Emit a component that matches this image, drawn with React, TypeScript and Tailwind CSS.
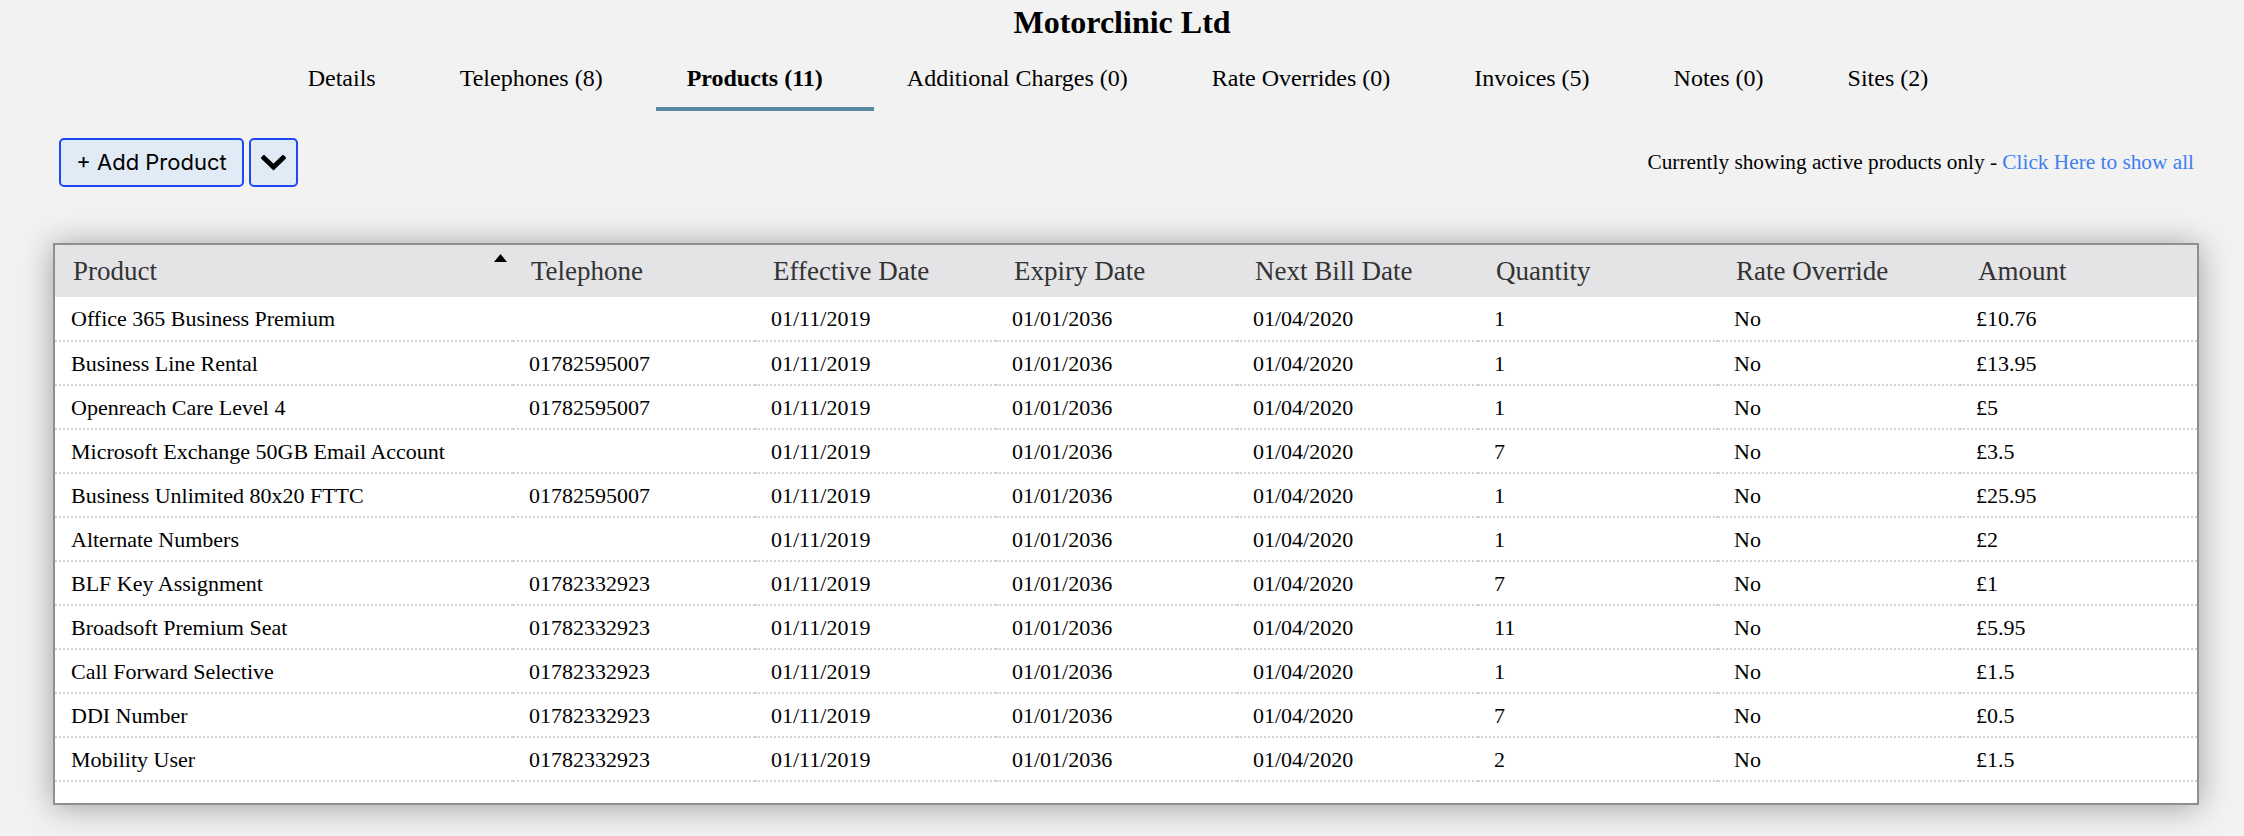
import React from 'react';

const tabs = [
  { label: 'Details' },
  { label: 'Telephones (8)' },
  { label: 'Products (11)', active: true },
  { label: 'Additional Charges (0)' },
  { label: 'Rate Overrides (0)' },
  { label: 'Invoices (5)' },
  { label: 'Notes (0)' },
  { label: 'Sites (2)' },
];

const columns = ['Product', 'Telephone', 'Effective Date', 'Expiry Date', 'Next Bill Date', 'Quantity', 'Rate Override', 'Amount'];

const products = [
  ['Office 365 Business Premium', '', '1', '£10.76'],
  ['Business Line Rental', '01782595007', '1', '£13.95'],
  ['Openreach Care Level 4', '01782595007', '1', '£5'],
  ['Microsoft Exchange 50GB Email Account', '', '7', '£3.5'],
  ['Business Unlimited 80x20 FTTC', '01782595007', '1', '£25.95'],
  ['Alternate Numbers', '', '1', '£2'],
  ['BLF Key Assignment', '01782332923', '7', '£1'],
  ['Broadsoft Premium Seat', '01782332923', '11', '£5.95'],
  ['Call Forward Selective', '01782332923', '1', '£1.5'],
  ['DDI Number', '01782332923', '7', '£0.5'],
  ['Mobility User', '01782332923', '2', '£1.5'],
];

const App: React.FC = () => {
  return (
    <div className="min-h-screen bg-[#f2f2f2] font-['Liberation_Serif',serif] text-black">
      <h1 className="pt-[4px] text-center text-[32px] font-bold leading-[36px]">Motorclinic Ltd</h1>

      {/* Tabs */}
      <nav className="flex justify-center pr-[8px]">
        {tabs.map((tab) => (
          <div key={tab.label} className="pt-[23px]">
            <div className={`px-[42px] pb-[14px] text-[24px] leading-[30px] ${tab.active ? 'font-bold' : ''}`}>
              {tab.label}
            </div>
            <div className={tab.active ? 'ml-[11px] -mr-[9px] h-[4px] bg-[#5b88a1]' : 'h-[4px]'}></div>
          </div>
        ))}
      </nav>

      {/* Toolbar */}
      <div className="mt-[27px] flex items-center justify-between pl-[59px] pr-[50px]">
        <div className="flex gap-[5px]">
          <button className="h-[49px] w-[185px] rounded-[5px] border-2 border-[#1f48f5] bg-[#e1ebf6] font-['Inter',sans-serif] text-[22px] text-black">
            + Add Product
          </button>
          <button className="flex h-[49px] w-[49px] items-center justify-center rounded-[5px] border-2 border-[#1f48f5] bg-[#e1ebf6]">
            <svg width="25" height="16" viewBox="0 0 25 16">
              <path d="M3 3 L12.5 12 L22 3" fill="none" stroke="black" strokeWidth="5" strokeLinecap="square" />
            </svg>
          </button>
        </div>
        <div className="text-[21.3px]">
          Currently showing active products only - <a className="text-[#3f7ff0] cursor-pointer">Click Here to show all</a>
        </div>
      </div>

      {/* Products table */}
      <div className="mt-[56px] ml-[53px] mr-[45px] border-2 border-[#8f8f8f] bg-white pb-[21px] shadow-[0_2px_30px_rgba(0,0,0,0.35)]">
        <table className="w-full table-fixed border-collapse">
          <colgroup>
            <col className="w-[458px]" />
            <col className="w-[242px]" />
            <col className="w-[241px]" />
            <col className="w-[241px]" />
            <col className="w-[241px]" />
            <col className="w-[240px]" />
            <col className="w-[242px]" />
            <col />
          </colgroup>
          <thead>
            <tr className="h-[52px] bg-[#e4e4e6]">
              {columns.map((col, i) => (
                <th key={col} className="relative pl-[18px] text-left text-[27px] font-normal text-[#333]">
                  {col}
                  {i === 0 && (
                    <svg className="absolute right-[6px] top-[9px]" width="13" height="8" viewBox="0 0 13 8">
                      <path d="M6.5 0 L13 8 L0 8 Z" fill="black" />
                    </svg>
                  )}
                </th>
              ))}
            </tr>
          </thead>
          <tbody>
            {products.map(([name, tel, qty, amount]) => (
              <tr key={name} className="h-[44px] border-b-2 border-dotted border-[#d2d2d2] text-[22px]">
                <td className="pl-[16px]">{name}</td>
                <td className="pl-[16px]">{tel}</td>
                <td className="pl-[16px]">01/11/2019</td>
                <td className="pl-[16px]">01/01/2036</td>
                <td className="pl-[16px]">01/04/2020</td>
                <td className="pl-[16px]">{qty}</td>
                <td className="pl-[16px]">No</td>
                <td className="pl-[16px]">{amount}</td>
              </tr>
            ))}
          </tbody>
        </table>
      </div>
    </div>
  );
};

export default App;
